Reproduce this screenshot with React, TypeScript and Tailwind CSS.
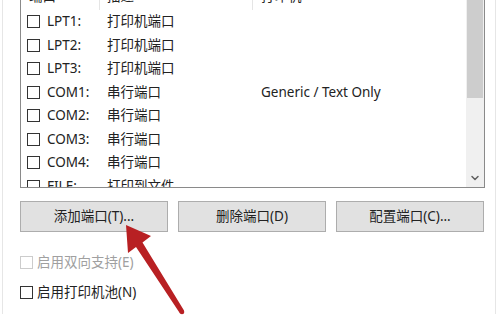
import React from 'react';
import { ChevronDown } from 'lucide-react';

const PORTS = [
  { name: 'LPT1:', desc: '打印机端口', printer: '' },
  { name: 'LPT2:', desc: '打印机端口', printer: '' },
  { name: 'LPT3:', desc: '打印机端口', printer: '' },
  { name: 'COM1:', desc: '串行端口', printer: 'Generic / Text Only' },
  { name: 'COM2:', desc: '串行端口', printer: '' },
  { name: 'COM3:', desc: '串行端口', printer: '' },
  { name: 'COM4:', desc: '串行端口', printer: '' },
  { name: 'FILE:', desc: '打印到文件', printer: '' },
];

function Box({ disabled }: { disabled?: boolean }) {
  return (
    <span
      className={`inline-block w-[13px] h-[13px] shrink-0 border bg-white ${
        disabled ? 'border-[#cccccc]' : 'border-[#333333]'
      }`}
    />
  );
}

function Arrow() {
  return (
    <svg className="absolute inset-0 pointer-events-none" width="500" height="331" viewBox="0 0 500 331">
      <polygon
        points="126,225 151,236 142.5,242.5 184,310.5 180,313.5 136,247 128,253"
        fill="#b82023"
      />
      <circle cx="182" cy="312" r="2.3" fill="#b82023" />
    </svg>
  );
}

export default function App() {
  return (
    <div
      className="relative w-[500px] h-[331px] bg-white overflow-hidden text-[13.5px] text-[#222]"
      style={{ fontFamily: '"Noto Sans", "Noto Sans CJK SC", sans-serif' }}
    >
      <div className="ml-[2px] w-[494px] h-full border-x border-[#e6e6e6] pl-[17px]">
        {/* Port list */}
        <div className="-mt-[17px] w-[465px] h-[205px] border border-[#8a8a8a] flex overflow-hidden">
          <div className="flex-1 min-w-0">
            <div className="h-[26px] flex items-center leading-none">
              <div className="w-[79px] pl-[8px] border-r border-[#e5e5e5] h-full flex items-center">端口</div>
              <div className="w-[153px] pl-[7px] border-r border-[#e5e5e5] h-full flex items-center">描述</div>
              <div className="pl-[8px]">打印机</div>
            </div>
            {PORTS.map((p) => (
              <div key={p.name} className="h-[23.5px] flex items-center leading-none whitespace-nowrap">
                <div className="w-[79px] pl-[6px] flex items-center gap-[7px]">
                  <Box />
                  <span>{p.name}</span>
                </div>
                <div className="w-[153px] pl-[7px]">{p.desc}</div>
                <div className="pl-[8px]">{p.printer}</div>
              </div>
            ))}
          </div>
          <div className="w-[18px] bg-[#f0f0f0] flex flex-col">
            <div className="h-[16px]" />
            <div className="h-[98px] mx-[1px] bg-[#cdcdcd]" />
            <div className="flex-1" />
            <div className="h-[18px] flex items-center justify-center text-[#606060]">
              <ChevronDown size={12} strokeWidth={3} />
            </div>
          </div>
        </div>

        {/* Buttons */}
        <div className="mt-[13px] flex gap-[10px]">
          {['添加端口(T)...', '删除端口(D)', '配置端口(C)...'].map((t) => (
            <button
              key={t}
              className="w-[148px] h-[31px] bg-[#e1e1e1] border border-[#adadad] flex items-center justify-center leading-none"
            >
              {t}
            </button>
          ))}
        </div>

        {/* Options */}
        <div className="mt-[24px] flex items-center gap-[4px] leading-none text-[#a0a0a0]">
          <Box disabled />
          <span>启用双向支持(E)</span>
        </div>
        <div className="mt-[16px] flex items-center gap-[4px] leading-none">
          <Box />
          <span>启用打印机池(N)</span>
        </div>
      </div>
      <Arrow />
    </div>
  );
}
